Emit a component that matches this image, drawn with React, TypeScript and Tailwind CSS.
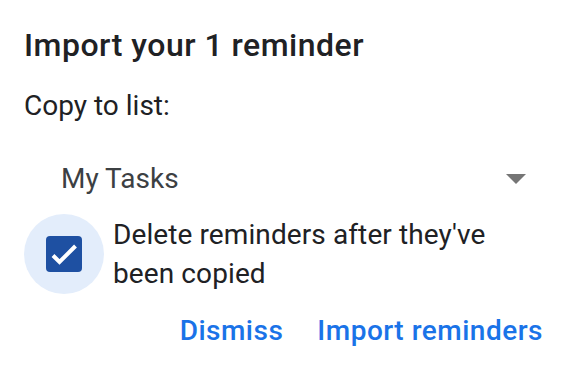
import React from 'react';

const CheckIcon: React.FC = () => (
  <svg width="36" height="36" viewBox="0 0 36 36">
    <rect x="0" y="0" width="36" height="36" rx="4" fill="#1e50a2" />
    <path d="M7 19.5 L13.5 26 L29.5 10" fill="none" stroke="#ffffff" strokeWidth="4" />
  </svg>
);

export default function App() {
  return (
    <div
      className="w-[567px] h-[365px] bg-white pl-6 pr-6 pt-[25px] text-[#202124]"
      style={{ fontFamily: 'Roboto, "Liberation Sans", sans-serif' }}
    >
      <h1 className="text-[32px] leading-[40px] font-medium tracking-[0.5px]">Import your 1 reminder</h1>
      <p className="mt-[23px] text-[28px] leading-[36px]">Copy to list:</p>

      {/* Select */}
      <div className="mt-[37px] flex items-center justify-between pl-[37px] pr-[17px]">
        <span className="text-[28px] leading-[36px] text-[#3c4043]">My Tasks</span>
        <span className="w-0 h-0 border-l-[10px] border-r-[10px] border-t-[10px] border-l-transparent border-r-transparent border-t-[#757575]" />
      </div>

      {/* Checkbox row */}
      <div className="mt-[17px] flex items-start">
        <div className="w-20 h-20 shrink-0 rounded-full bg-[#e3edfb] flex items-center justify-center">
          <CheckIcon />
        </div>
        <p className="ml-[9px] mt-[1px] text-[28px] leading-[39px] tracking-[0.1px]">
          Delete reminders after they've been copied
        </p>
      </div>

      {/* Actions */}
      <div className="mt-[19px] flex justify-end gap-[34px] text-[28px] leading-[36px] font-medium tracking-[0.5px] text-[#1a73e8]">
        <button>Dismiss</button>
        <button>Import reminders</button>
      </div>
    </div>
  );
}
